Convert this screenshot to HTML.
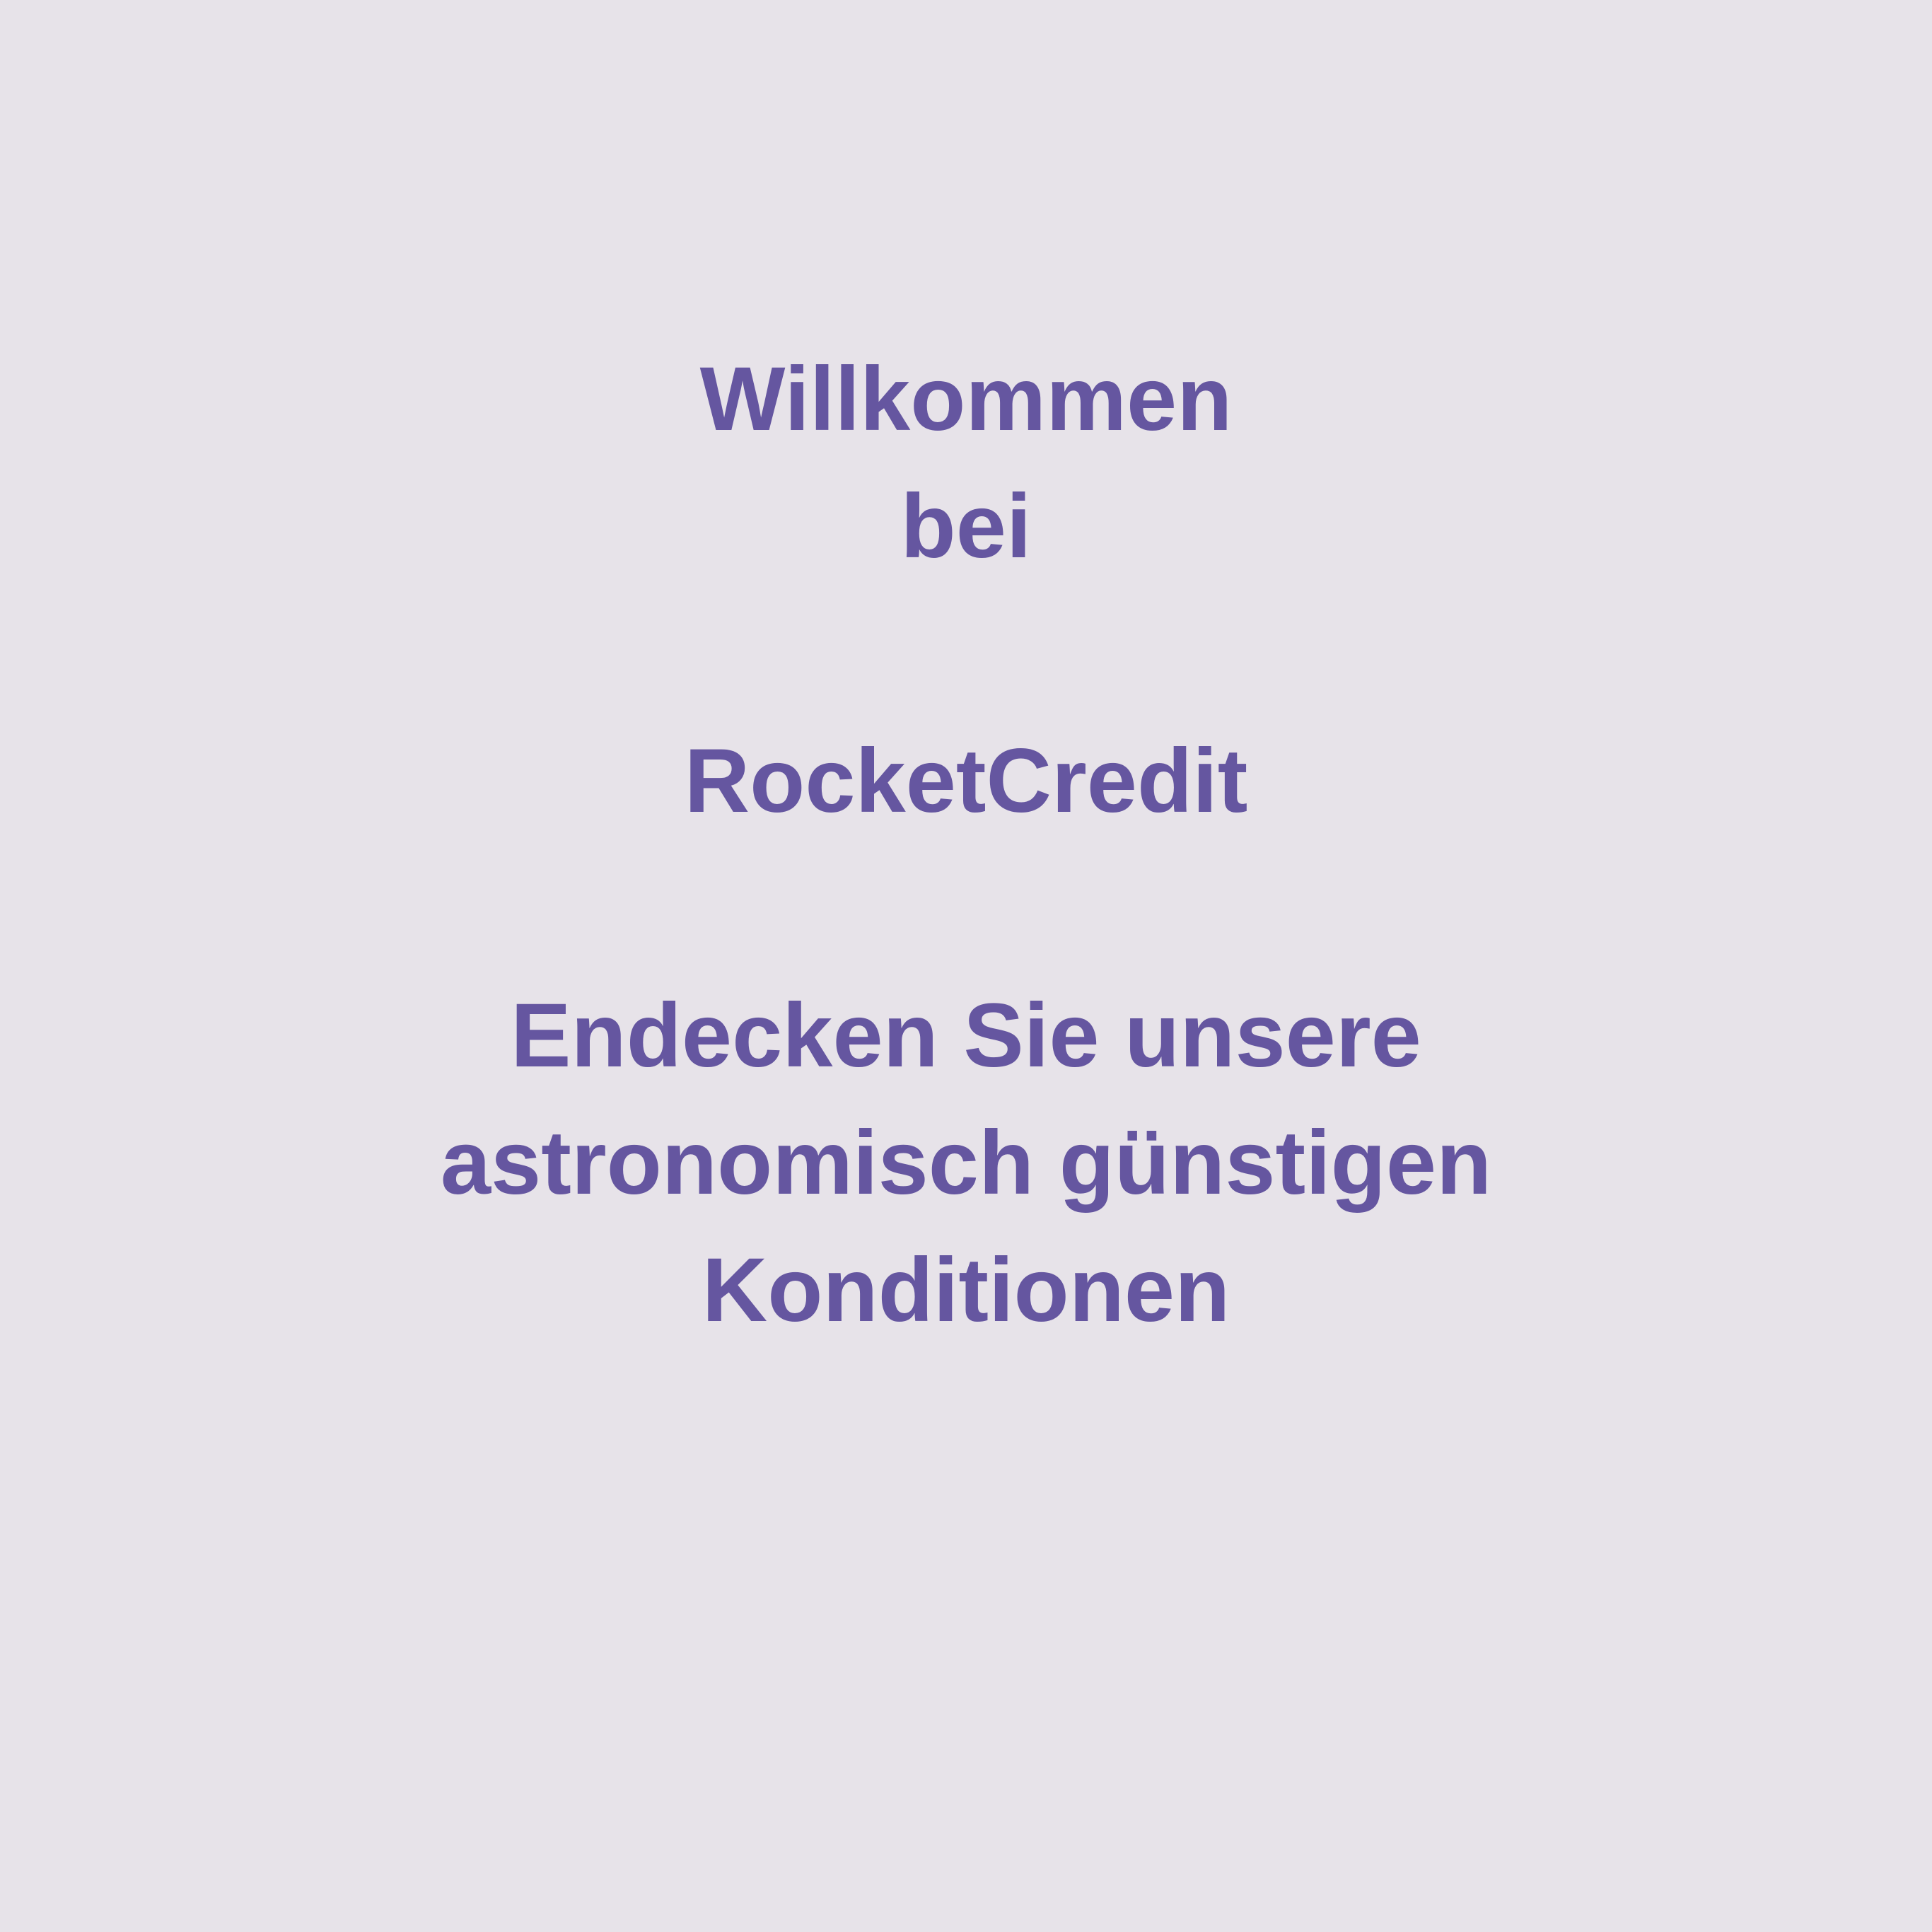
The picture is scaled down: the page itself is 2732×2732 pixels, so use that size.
<!DOCTYPE html>
<html><head><meta charset="utf-8"><style>
html,body{margin:0;padding:0;background:#e7e3e9;}
body{width:2732px;height:2732px;overflow:hidden;}
.t{position:absolute;left:0;top:475px;width:2732px;text-align:center;font-family:"Liberation Sans",sans-serif;font-weight:bold;font-size:128px;line-height:180px;color:#6556a0;}
</style></head><body>
<div class="t">Willkommen<br>bei<br>&nbsp;<br>RocketCredit<br>&nbsp;<br>Endecken Sie unsere<br>astronomisch günstigen<br>Konditionen</div>
</body></html>
